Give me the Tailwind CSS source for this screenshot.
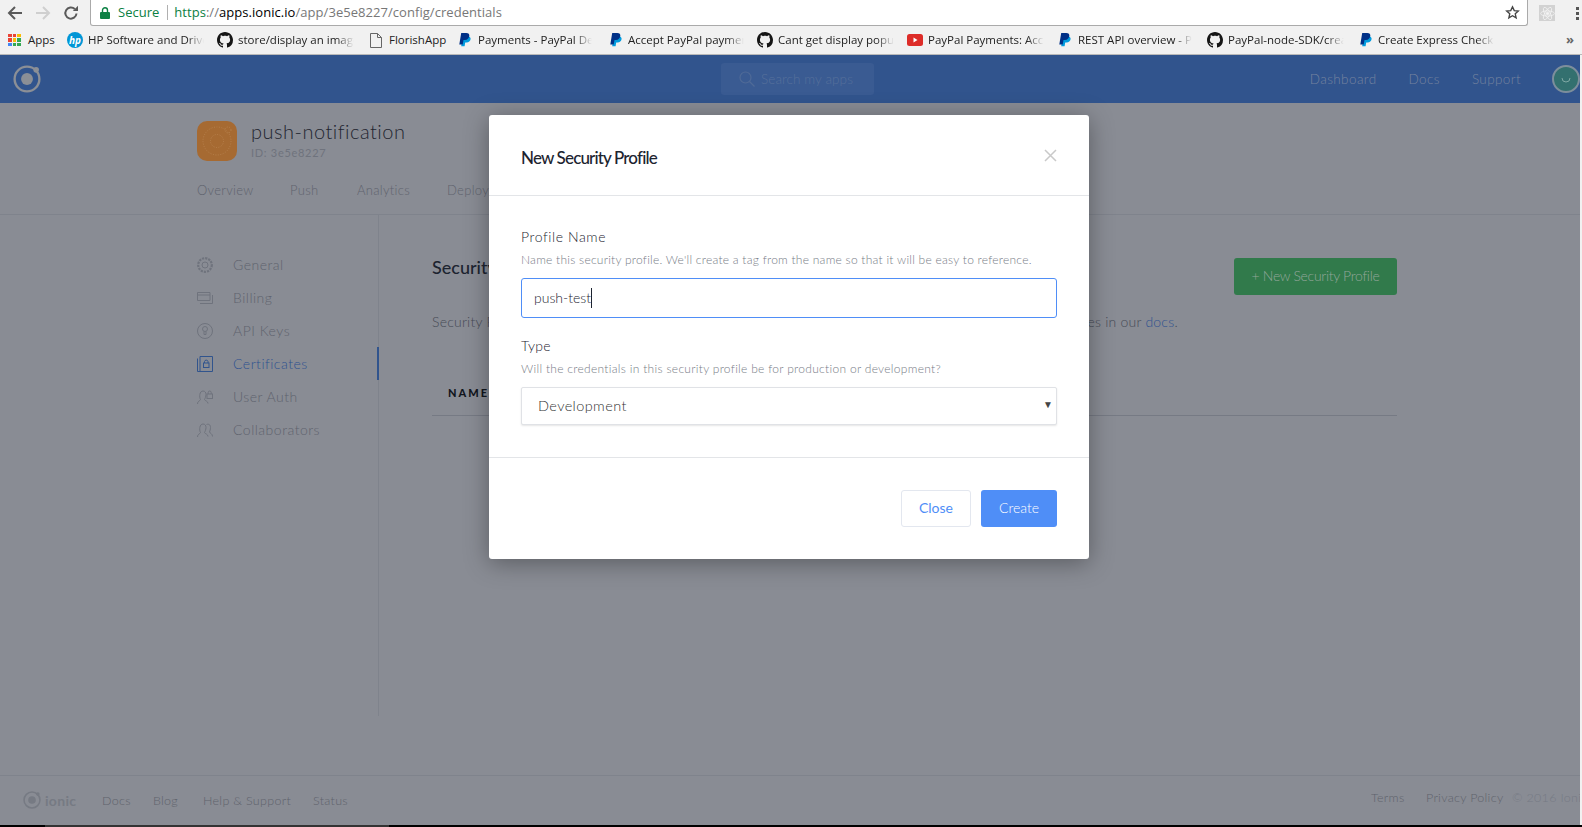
<!DOCTYPE html>
<html lang="en">
<head>
<meta charset="UTF-8">
<title>Security Profiles</title>
<script src="https://cdn.jsdelivr.net/npm/@tailwindcss/browser@4"></script>
</head>
<body class="m-0 overflow-hidden bg-[#f1f1f1]">
<svg class="hidden" width="0" height="0">
  <defs>
    <symbol id="gh" viewBox="0 0 16 16"><path fill="#161616" d="M8 0C3.58 0 0 3.58 0 8c0 3.54 2.29 6.53 5.47 7.59.4.07.55-.17.55-.38 0-.19-.01-.82-.01-1.49-2.01.37-2.53-.49-2.69-.94-.09-.23-.48-.94-.82-1.13-.28-.15-.68-.52-.01-.53.63-.01 1.08.58 1.23.82.72 1.21 1.87.87 2.33.66.07-.52.28-.87.51-1.07-1.78-.2-3.64-.89-3.64-3.95 0-.87.31-1.59.82-2.15-.08-.2-.36-1.02.08-2.12 0 0 .67-.21 2.2.82.64-.18 1.32-.27 2-.27s1.36.09 2 .27c1.53-1.04 2.2-.82 2.2-.82.44 1.1.16 1.92.08 2.12.51.56.82 1.27.82 2.15 0 3.07-1.87 3.75-3.65 3.95.29.25.54.73.54 1.48 0 1.07-.01 1.93-.01 2.2 0 .21.15.46.55.38A8.01 8.01 0 0 0 16 8c0-4.42-3.58-8-8-8z"/></symbol>
    <symbol id="pp" viewBox="0 0 12 14"><path fill="#009cde" d="M3.6 3.2h5c2 0 3.2 1.1 3 2.9-.3 2.2-1.9 3.5-4 3.5H6.2l-.6 3.7H2.2z"/><path fill="#003087" d="M2.2 0h5.1c2.2 0 3.3 1.1 3 3-.3 2.400-2 3.900-4.300 3.900H4.500l-.8 4.700H.3z"/></symbol>
    <symbol id="ion" viewBox="0 0 26 26"><circle cx="13" cy="13" r="11.500" fill="none" stroke="currentColor" stroke-width="2.200"/><circle cx="13" cy="13" r="5.500" fill="currentColor"/><circle cx="21.500" cy="4.500" r="2.600" fill="currentColor"/></symbol>
  </defs>
</svg>

<div class="relative flex h-[827px] w-[1582px] flex-col overflow-hidden font-[Lato,sans-serif]">

  <!-- browser chrome -->
  <div class="h-[55px] shrink-0 border-b border-[#b9b9b9] bg-[#f1f1f1] font-['Open_Sans',sans-serif]">
    <div class="flex h-[26px] items-start">
      <div class="flex h-[25px] w-[90px] items-center pl-[7px]">
        <svg class="w-4 h-4" viewBox="0 0 16 16" fill="none" stroke="#5a5a5a" stroke-width="2"><path d="M15 8H2M8 2 2 8l6 6"/></svg>
        <svg class="ml-3 w-4 h-4" viewBox="0 0 16 16" fill="none" stroke="#cfcfcf" stroke-width="2"><path d="M1 8h13M8 2l6 6-6 6"/></svg>
        <svg class="ml-3 w-4 h-4" viewBox="0 0 16 16" fill="none" stroke="#5a5a5a" stroke-width="2"><path d="M13.500 8.500A5.600 5.600 0 1 1 11.800 4"/><path fill="#5a5a5a" stroke="none" d="M9.800 6H15V.8z"/></svg>
      </div>
      <div class="flex h-[26px] w-[1438px] items-center rounded-b-[3px] border-b border-l border-r border-[#aaaaaa] bg-white text-[13px]">
        <svg class="ml-[9px] w-[10px] h-[12px]" viewBox="0 0 10 12"><path fill="#0b8043" d="M1 5h8a1 1 0 0 1 1 1v5a1 1 0 0 1-1 1H1a1 1 0 0 1-1-1V6a1 1 0 0 1 1-1z"/><path fill="none" stroke="#0b8043" stroke-width="1.400" d="M2.500 5V3.300a2.500 2.500 0 0 1 5 0V5"/></svg>
        <span class="ml-[8px] text-[#0b8043]">Secure</span>
        <span class="ml-[8px] h-[15px] w-px bg-[#b0b0b0]"></span>
        <span class="ml-[6px] tracking-[0.05px]"><span class="text-[#0b8043]">https</span><span class="text-[#777]">://</span><span class="text-black">apps.ionic.io</span><span class="text-[#777]">/app/3e5e8227/config/credentials</span></span>
        <svg class="ml-auto mr-[7px] w-[15px] h-[15px]" viewBox="0 0 24 24" fill="none" stroke="#444" stroke-width="2.200"><path d="m12 3 2.800 6 6.500.7-4.900 4.400 1.400 6.400L12 17.200 6.200 20.500l1.400-6.400L2.700 9.700 9.200 9z"/></svg>
      </div>
      <div class="ml-[11px] mt-[5px] flex h-4 w-4 items-center justify-center bg-[#d2d2d2]">
        <svg class="w-[15px] h-[15px]" viewBox="0 0 24 24" fill="none" stroke="#f4f4f4" stroke-width="1.200"><ellipse cx="12" cy="12" rx="11" ry="4.200"/><ellipse cx="12" cy="12" rx="11" ry="4.200" transform="rotate(60 12 12)"/><ellipse cx="12" cy="12" rx="11" ry="4.200" transform="rotate(120 12 12)"/><circle cx="12" cy="12" r="2" fill="#f4f4f4"/></svg>
      </div>
      <div class="ml-[21px] mt-[7px] flex flex-col gap-[2px]">
        <span class="h-[3px] w-[3px] bg-[#555]"></span><span class="h-[3px] w-[3px] bg-[#555]"></span><span class="h-[3px] w-[3px] bg-[#555]"></span>
      </div>
    </div>
    <div class="flex h-[28px] items-center text-[11.500px] text-[#222] whitespace-nowrap">
      <div class="flex w-[67px] shrink-0 items-center pl-2">
        <div class="grid grid-cols-3 gap-px w-[13px]">
          <i class="h-[3.500px] bg-[#ea4335]"></i><i class="h-[3.500px] bg-[#ea4335]"></i><i class="h-[3.500px] bg-[#fbbc05]"></i>
          <i class="h-[3.500px] bg-[#ea4335]"></i><i class="h-[3.500px] bg-[#fbbc05]"></i><i class="h-[3.500px] bg-[#34a853]"></i>
          <i class="h-[3.500px] bg-[#4285f4]"></i><i class="h-[3.500px] bg-[#34a853]"></i><i class="h-[3.500px] bg-[#34a853]"></i>
        </div>
        <span class="ml-[7px]">Apps</span>
      </div>
      <div class="flex w-[150px] shrink-0 items-center">
        <span class="flex h-4 w-4 items-center justify-center rounded-full bg-[#0096d6] text-[10px] font-bold italic leading-none text-white">hp</span>
        <span class="ml-[5px] w-[116px] overflow-hidden [mask-image:linear-gradient(90deg,#000_85%,transparent)]">HP Software and Driver Downloads</span>
      </div>
      <div class="flex w-[150px] shrink-0 items-center">
        <svg class="w-4 h-4"><use href="#gh"/></svg>
        <span class="ml-[5px] w-[116px] overflow-hidden [mask-image:linear-gradient(90deg,#000_85%,transparent)]">store/display an image from</span>
      </div>
      <div class="flex w-[90px] shrink-0 items-center pl-[3px]">
        <svg class="w-[12px] h-[15px]" viewBox="0 0 12 15" fill="none" stroke="#666"><path d="M.5.500h7l4 4v10H.500zM7.500.500v4h4"/></svg>
        <span class="ml-[7px]">FlorishApp</span>
      </div>
      <div class="flex w-[150px] shrink-0 items-center pl-[2px]">
        <svg class="w-[12px] h-[14px]"><use href="#pp"/></svg>
        <span class="ml-[7px] w-[114px] overflow-hidden [mask-image:linear-gradient(90deg,#000_85%,transparent)]">Payments - PayPal Developer</span>
      </div>
      <div class="flex w-[150px] shrink-0 items-center pl-[3px]">
        <svg class="w-[12px] h-[14px]"><use href="#pp"/></svg>
        <span class="ml-[6px] w-[116px] overflow-hidden [mask-image:linear-gradient(90deg,#000_85%,transparent)]">Accept PayPal payments</span>
      </div>
      <div class="flex w-[150px] shrink-0 items-center">
        <svg class="w-4 h-4"><use href="#gh"/></svg>
        <span class="ml-[5px] w-[116px] overflow-hidden [mask-image:linear-gradient(90deg,#000_85%,transparent)]">Cant get display popup</span>
      </div>
      <div class="flex w-[150px] shrink-0 items-center">
        <svg class="w-4 h-[12px]" viewBox="0 0 16 12"><rect width="16" height="12" rx="2.500" fill="#dd2c28"/><path fill="#fff" d="m6.500 3.500 4 2.500-4 2.500z"/></svg>
        <span class="ml-[5px] w-[116px] overflow-hidden [mask-image:linear-gradient(90deg,#000_85%,transparent)]">PayPal Payments: Accept</span>
      </div>
      <div class="flex w-[150px] shrink-0 items-center pl-[2px]">
        <svg class="w-[12px] h-[14px]"><use href="#pp"/></svg>
        <span class="ml-[7px] w-[114px] overflow-hidden [mask-image:linear-gradient(90deg,#000_85%,transparent)]">REST API overview - PayPal</span>
      </div>
      <div class="flex w-[150px] shrink-0 items-center">
        <svg class="w-4 h-4"><use href="#gh"/></svg>
        <span class="ml-[5px] w-[116px] overflow-hidden [mask-image:linear-gradient(90deg,#000_85%,transparent)]">PayPal-node-SDK/create</span>
      </div>
      <div class="flex w-[150px] shrink-0 items-center pl-[3px]">
        <svg class="w-[12px] h-[14px]"><use href="#pp"/></svg>
        <span class="ml-[6px] w-[116px] overflow-hidden [mask-image:linear-gradient(90deg,#000_85%,transparent)]">Create Express Checkout</span>
      </div>
      <span class="ml-[59px] text-[13px] font-bold text-[#666]">»</span>
    </div>
  </div>

  <div class="flex min-h-0 flex-1">
    <div class="flex w-[1580px] flex-col bg-[#898c94]">

      <!-- top nav -->
      <header class="flex h-[48px] shrink-0 items-center bg-[#31548d] text-[13.500px] font-light tracking-[0.4px] text-[#75839f] whitespace-nowrap">
        <svg class="ml-[13px] h-[28px] w-[28px] shrink-0 text-[#8b8f96]"><use href="#ion"/></svg>
        <div class="ml-[680px] flex h-[32px] w-[153px] shrink-0 items-center rounded-[3px] bg-[#3a5b92] pl-[18px] text-[#56709b]">
          <svg class="h-4 w-4" viewBox="0 0 16 16" fill="none" stroke="#4f6a97" stroke-width="1.200"><circle cx="6.500" cy="6.500" r="5.500"/><path d="m10.500 10.500 5 5"/></svg>
          <span class="ml-[6px] tracking-[0.1px]">Search my apps</span>
        </div>
        <span class="ml-auto">Dashboard</span>
        <span class="ml-[32px]">Docs</span>
        <span class="ml-[32px]">Support</span>
        <div class="ml-[31px] flex h-[28px] w-[28px] shrink-0 items-center justify-center rounded-full border-2 border-[#7d8e9c] bg-[#33706f]">
          <svg class="h-3 w-3" viewBox="0 0 12 12" fill="none" stroke="#7fa8a4"><path d="M2 5a4 4 0 0 0 8 0"/></svg>
        </div>
      </header>

      <!-- app header -->
      <section class="h-[112px] shrink-0 border-b border-[#7f838c] pl-[197px]">
        <div class="flex pt-[18px]">
          <div class="flex h-[40px] w-[40px] items-center justify-center rounded-[10px] bg-[#a66a32]">
            <svg class="h-[32px] w-[32px]" viewBox="0 0 32 32" fill="none" stroke="#bb8856" stroke-width="0.700" stroke-dasharray="1 1.500"><circle cx="16" cy="16" r="14"/><circle cx="16" cy="16" r="6.500"/><circle cx="27" cy="5" r="3"/></svg>
          </div>
          <div class="ml-[14px]">
            <div class="mt-[-4px] text-[20px] font-light leading-[28px] tracking-[0.5px] text-[#1f2530]">push-notification</div>
            <div class="mt-px text-[11px] leading-[14px] tracking-[0.7px] text-[#6f737d]">ID: 3e5e8227</div>
          </div>
        </div>
        <nav class="mt-[20px] flex text-[13px] font-light tracking-[0.3px] text-[#5f636e]">
          <span class="w-[93px]">Overview</span>
          <span class="w-[67px]">Push</span>
          <span class="w-[90px]">Analytics</span>
          <span>Deploy</span>
        </nav>
      </section>

      <div class="flex min-h-0 flex-1">
        <!-- side nav -->
        <aside class="h-[501px] w-[379px] shrink-0 border-r border-[#7f838c] pl-[197px] pt-[33px] text-[14px] font-light tracking-[0.5px] text-[#5f636e]">
          <div class="flex h-[33px] items-center">
            <svg class="h-4 w-4" viewBox="0 0 16 16" fill="none" stroke="#6f737d"><circle cx="8" cy="8" r="3"/><circle cx="8" cy="8" r="6.800" stroke-width="2.200" stroke-dasharray="2.200 1"/></svg>
            <span class="ml-[20px]">General</span>
          </div>
          <div class="flex h-[33px] items-center">
            <svg class="h-4 w-4" viewBox="0 0 16 16" fill="none" stroke="#6f737d"><path d="M.5 2.500h12.500v8H.500zM.5 5h12.500M3 13.500h12.500V5"/></svg>
            <span class="ml-[20px]">Billing</span>
          </div>
          <div class="flex h-[33px] items-center">
            <svg class="h-4 w-4" viewBox="0 0 16 16" fill="none" stroke="#6f737d"><circle cx="8" cy="8" r="7.500"/><circle cx="8" cy="6" r="2.500"/><path d="M7 8.500v3h2v-3"/></svg>
            <span class="ml-[20px]">API Keys</span>
          </div>
          <div class="-mr-px flex h-[33px] items-center border-r-2 border-[#31548d] text-[#2f5290]">
            <svg class="h-4 w-4" viewBox="0 0 16 16" fill="none" stroke="#31548d"><path d="M3 .5h12.500v15H3zM.5 2.500v13H3"/><rect x="6.500" y="7" width="5.500" height="4.500"/><path d="M7.500 7V5.500a1.800 1.800 0 0 1 3.500 0V7"/></svg>
            <span class="ml-[20px]">Certificates</span>
          </div>
          <div class="flex h-[33px] items-center">
            <svg class="h-4 w-4" viewBox="0 0 16 16" fill="none" stroke="#6f737d"><path d="M.5 15c0-3 2.500-3 3-4.500C2 8 2.500 2 6 2c2 0 3 1.500 3 3.500 0 2-1 4-1.500 5 .5 1.500 3.500 1.500 3.500 4"/><rect x="10" y="5" width="5.500" height="4.500"/><path d="M11.200 5V3.500a1.500 1.500 0 0 1 3 0V5"/></svg>
            <span class="ml-[20px]">User Auth</span>
          </div>
          <div class="flex h-[33px] items-center">
            <svg class="h-4 w-4" viewBox="0 0 16 16" fill="none" stroke="#6f737d"><path d="M.5 15c0-3 2.500-3 3-4.500C2 8 2.500 2 6 2c2 0 3 1.500 3 3.500 0 2-1 4-1.500 5 .5 1.500 3.500 1.500 3.500 4"/><path d="M9.500 2.500c3-1 4 1 4 3s-.500 3-1 4.500c.5 1.500 3 1.500 3 4.500"/></svg>
            <span class="ml-[20px]">Collaborators</span>
          </div>
        </aside>

        <!-- main -->
        <main class="ml-[53px] w-[965px]">
          <div class="flex items-start justify-between pt-[43px]">
            <h1 class="mt-[-3px] text-[18px] font-medium leading-[24px] text-[#1d2430]">Security Profiles</h1>
            <button class="h-[37px] w-[163px] rounded-[3px] bg-[#317a4b] pb-[2px] text-[14px] font-light tracking-[-0.3px] text-[#93a69a]">+ New Security Profile</button>
          </div>
          <p class="mt-[17px] whitespace-nowrap text-[14px] font-light leading-[20px] tracking-[0.23px] text-[#474b56]">Security Profiles contain your push credentials for iOS and Android apps. Learn more about security profiles in our <span class="text-[#2f5290]">docs</span>.</p>
          <div class="mt-[50px] flex h-[34px] items-center border-b border-[#767a84] pb-[11px] pl-[16px] text-[11px] font-black tracking-[2px] text-[#12161e]">NAME</div>
        </main>
      </div>

      <!-- footer -->
      <footer class="flex h-[50px] shrink-0 items-center whitespace-nowrap border-t border-[#7f838c] pt-[2px] text-[12.500px] font-light tracking-[0.3px] text-[#5f636c]">
        <svg class="mb-[3px] ml-[23px] h-[18px] w-[18px] shrink-0 text-[#767a83]"><use href="#ion"/></svg>
        <span class="mb-[3px] ml-[4px] w-[57px] shrink-0 text-[14px] font-bold text-[#767a83]">ionic</span>
        <span class="w-[51px] shrink-0">Docs</span>
        <span class="w-[50px] shrink-0">Blog</span>
        <span class="w-[110px] shrink-0">Help &amp; Support</span>
        <span>Status</span>
        <div class="ml-auto mb-[7px] flex w-[209px] shrink-0 overflow-hidden">
          <span class="w-[55px] shrink-0">Terms</span>
          <span class="w-[86px] shrink-0">Privacy Policy</span>
          <span class="shrink-0 text-[#767a84]">© 2016 Ionic</span>
        </div>
      </footer>
    </div>
    <div class="w-[2px] bg-[#f1f1f1]"></div>
  </div>

  <!-- taskbar edge -->
  <div class="flex h-[2px] shrink-0 bg-black"><div class="ml-[45px] w-[344px] bg-[#333]"></div></div>

  <!-- modal -->
  <div class="absolute left-[489px] top-[115px] h-[444px] w-[600px] rounded-[3px] bg-white shadow-[0_4px_24px_rgba(0,0,0,0.35)]">
    <div class="relative flex h-[81px] items-center border-b border-[#e3e5e8] pl-[32px] pt-[6px]">
      <h2 class="text-[17px] font-medium tracking-[-0.85px] text-[#1d2430]">New Security Profile</h2>
      <svg class="absolute right-[32px] top-[34px] h-[13px] w-[13px]" viewBox="0 0 13 13" stroke="#c9c9c9" stroke-width="1.500"><path d="m1 1 11 11M12 1 1 12"/></svg>
    </div>
    <form class="border-b border-[#e3e5e8] px-[32px] pb-[32px] pt-[31px]">
      <label class="block h-[20px] text-[14px] font-light leading-[20px] tracking-[0.6px] text-[#1d2430]">Profile Name</label>
      <p class="mt-[4px] h-[18px] text-[12px] font-light leading-[18px] tracking-[0.25px] text-[#777c86]">Name this security profile. We'll create a tag from the name so that it will be easy to reference.</p>
      <div class="relative mt-[9px]">
        <input type="text" value="push-test" class="block h-[40px] w-full rounded-[3px] border-[1.500px] border-[#4f8ef7] px-[12px] pb-[2px] text-[14px] font-light text-[#1d2430] outline-none">
        <span class="absolute left-[70px] top-[10px] h-[20px] w-px bg-[#1d2430]"></span>
      </div>
      <label class="mt-[18px] block h-[20px] text-[14px] font-light leading-[20px] tracking-[0.2px] text-[#1d2430]">Type</label>
      <p class="mt-[4px] h-[18px] text-[12px] font-light leading-[18px] tracking-[0.3px] text-[#777c86]">Will the credentials in this security profile be for production or development?</p>
      <div class="relative mt-[9px]">
        <select class="block h-[38px] w-full appearance-none rounded-[2px] border border-[#e0e2e6] bg-white px-[16px] text-[14.500px] font-light tracking-[0.4px] text-[#333] shadow-[0_1px_2px_rgba(0,0,0,0.1)] outline-none"><option>Development</option><option>Production</option></select>
        <span class="absolute right-[4px] top-[10px] text-[10px] text-[#444]">▼</span>
      </div>
    </form>
    <div class="flex justify-end gap-[10px] px-[32px] pt-[32px]">
      <button class="h-[37px] w-[70px] rounded-[3px] border border-[#e3e7ef] pb-[2px] text-[14px] text-[#4f8ef7]">Close</button>
      <button class="h-[37px] w-[76px] rounded-[3px] bg-[#4f8ef7] pb-[2px] text-[14px] font-light text-white">Create</button>
    </div>
  </div>
</div>
</body>
</html>
